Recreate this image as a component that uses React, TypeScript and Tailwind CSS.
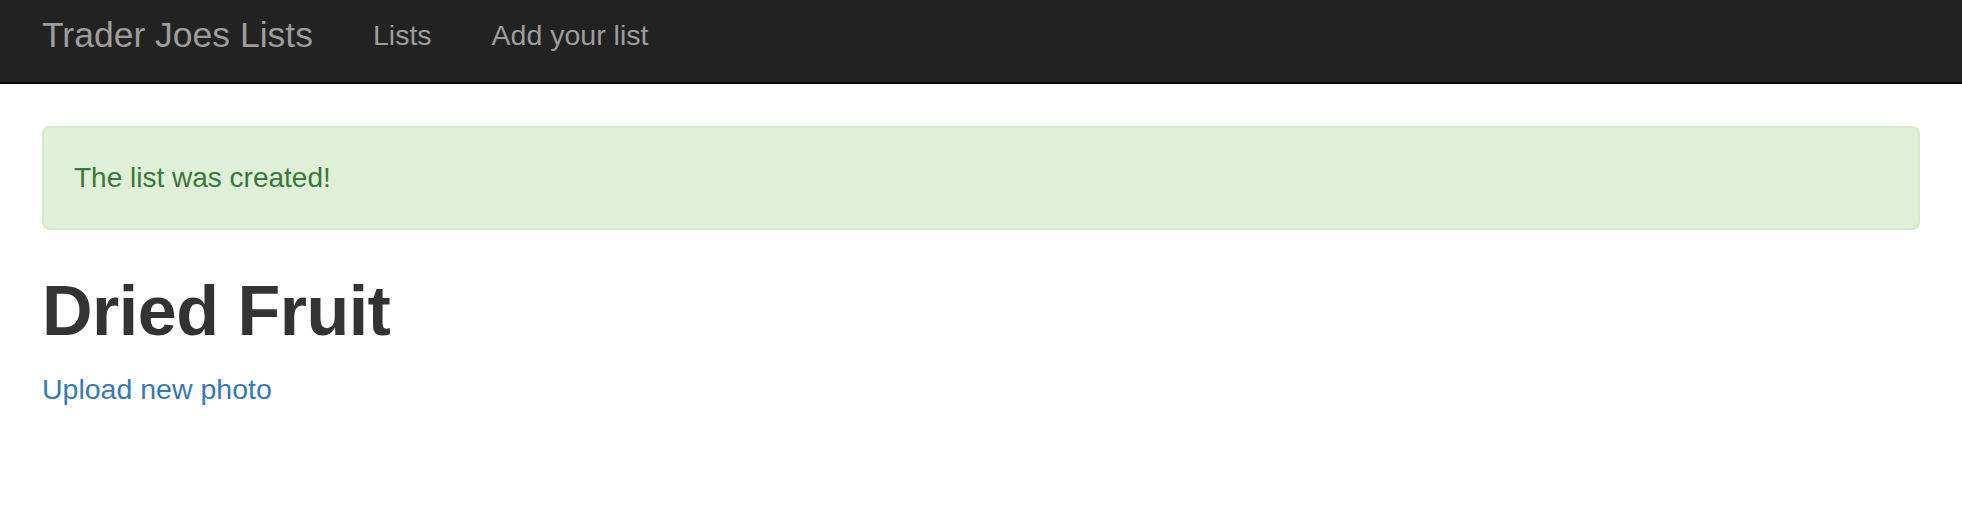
import React from "react";

export default function App() {
  const font = { fontFamily: '"Liberation Sans", Arial, Helvetica, sans-serif' };
  return (
    <div className="min-h-[510px] bg-white" style={font}>
      <nav className="h-[84px] bg-[#222222] border-b-2 border-[#080808] flex items-center pb-[12px] px-[42px]">
        <a className="text-[35.5px] leading-[40px] text-[#9d9d9d] pr-[60px]">Trader Joes Lists</a>
        <a className="text-[28.5px] leading-[40px] text-[#9d9d9d] pr-[60px]">Lists</a>
        <a className="text-[28.5px] leading-[40px] text-[#9d9d9d]">Add your list</a>
      </nav>
      <div className="px-[42px] pt-[42px]">
        <div className="rounded-[8px] border-2 border-[#d6e9c6] bg-[#dff0d8] px-[30px] py-[30px] text-[28px] leading-[40px] text-[#3c763d]">
          The list was created!
        </div>
        <h1 className="mt-[42px] text-[70px] leading-[79px] font-bold text-[#333333] tracking-[-0.5px]">Dried Fruit</h1>
        <p className="mt-[18px] text-[28.5px] leading-[40px]">
          <a className="text-[#337ab7]">Upload new photo</a>
        </p>
      </div>
    </div>
  );
}
